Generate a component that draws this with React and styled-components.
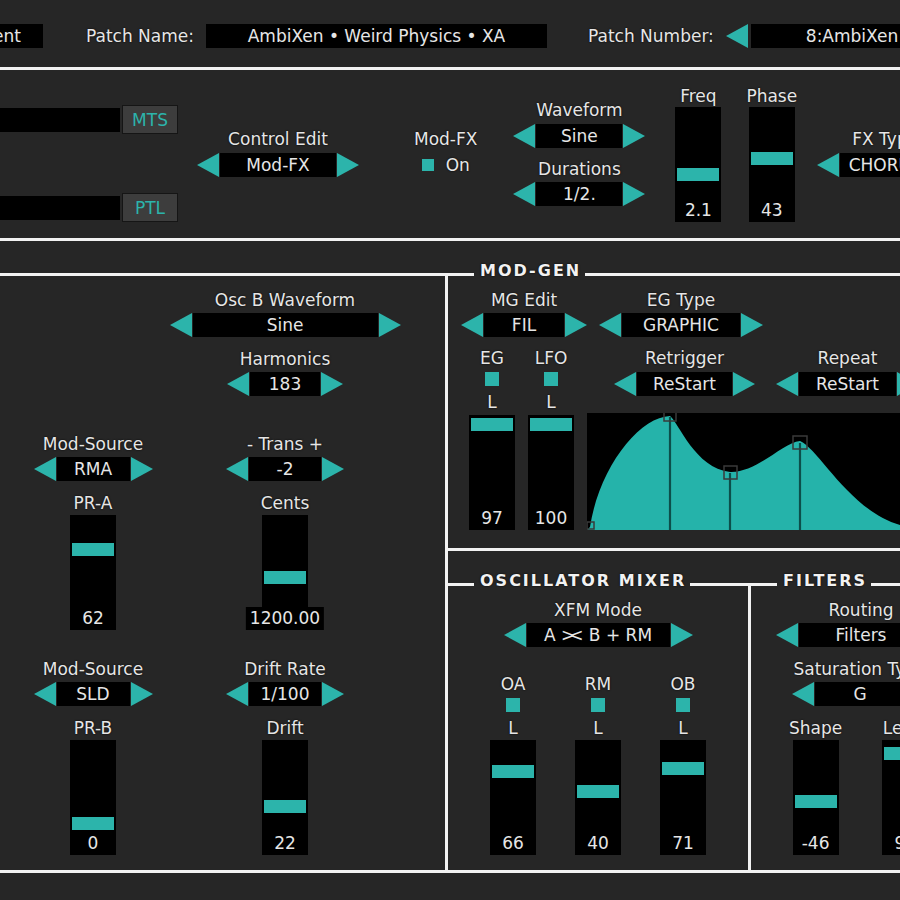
import React from "react";
import styled, { createGlobalStyle } from "styled-components";

const TEAL = "#2cb4ab";
const BG = "#262626";
const LINE = "#f2f2f2";

const GlobalStyle = createGlobalStyle`
  html, body { margin: 0; padding: 0; background: ${BG}; }
  #root { width: 900px; height: 900px; }
`;

const Screen = styled.div`
  width: 900px;
  height: 900px;
  overflow: hidden;
  background: ${BG};
  color: #e6e6e6;
  font-family: "DejaVu Sans", Verdana, sans-serif;
  font-size: 17px;
  line-height: 20px;
  display: flex;
  flex-direction: column;
  white-space: nowrap;
  text-shadow: 0 0 2px #000;
`;

const TopBar = styled.div`
  height: 67px;
  flex-shrink: 0;
  box-sizing: border-box;
  padding-top: 5px;
  display: flex;
  align-items: center;
`;

const Rule = styled.div`
  height: 3px;
  flex-shrink: 0;
  background: ${LINE};
`;

const Field = styled.div`
  flex-shrink: 0;
  width: ${(p) => p.$w}px;
  height: 24px;
  margin-left: ${(p) => p.$ml || 0}px;
  box-sizing: border-box;
  background: #000;
  display: flex;
  align-items: center;
  justify-content: ${(p) => p.$justify || "center"};
  padding: 0 ${(p) => p.$pad || 0}px;
  overflow: hidden;
`;

const BarLabel = styled.span`
  margin-left: ${(p) => p.$ml || 0}px;
  flex-shrink: 0;
`;

const ArrowSvg = styled.svg`
  display: block;
  flex-shrink: 0;
  width: 22px;
  height: 24px;
  margin-left: ${(p) => p.$ml || 0}px;
`;

function Arrow({ dir = "left", ml }) {
  return (
    <ArrowSvg viewBox="0 0 22 24" $ml={ml}>
      <polygon
        points={dir === "left" ? "0,12 22,0 22,24" : "0,0 22,12 0,24"}
        fill={TEAL}
      />
    </ArrowSvg>
  );
}

const StepRow = styled.div`
  display: flex;
  align-items: center;
  gap: 1px;
  flex-shrink: 0;
`;

const ValueBox = styled.div`
  width: ${(p) => p.$w}px;
  height: 24px;
  background: #000;
  display: flex;
  align-items: center;
  justify-content: center;
  flex-shrink: 0;
  overflow: hidden;
`;

const Tight = styled.span`
  letter-spacing: -6px;
  margin-right: 6px;
`;

function Stepper({ value, w }) {
  return (
    <StepRow>
      <Arrow dir="left" />
      <ValueBox $w={w}>{value}</ValueBox>
      <Arrow dir="right" />
    </StepRow>
  );
}

const Group = styled.div`
  display: flex;
  flex-direction: column;
  align-items: center;
  flex-shrink: 0;
  gap: ${(p) => (p.$gap ?? 3)}px;
  margin-top: ${(p) => p.$mt || 0}px;
  margin-left: ${(p) => p.$ml || 0}px;
`;

const Label = styled.div`
  height: 20px;
  line-height: 20px;
`;

const Track = styled.div`
  position: relative;
  width: 46px;
  height: 115px;
  background: #000;
  flex-shrink: 0;
  margin-top: ${(p) => p.$mt || 0}px;
`;

const Handle = styled.div`
  position: absolute;
  left: 2px;
  right: 2px;
  height: 13px;
  background: ${TEAL};
`;

const SliderValue = styled.div`
  position: absolute;
  bottom: 0;
  left: 50%;
  transform: translateX(-50%);
  height: 23px;
  line-height: 23px;
  padding: 0 4px;
  min-width: 46px;
  box-sizing: border-box;
  background: #000;
  text-align: center;
`;

function Slider({ at, value, mt }) {
  return (
    <Track $mt={mt}>
      <Handle style={{ top: at }} />
      <SliderValue>{value}</SliderValue>
    </Track>
  );
}

const Led = styled.div`
  width: ${(p) => p.$size || 14}px;
  height: ${(p) => p.$size || 14}px;
  background: ${TEAL};
  flex-shrink: 0;
  margin-top: ${(p) => p.$mt || 0}px;
`;

const FxSection = styled.div`
  height: 168px;
  flex-shrink: 0;
  display: flex;
  align-items: flex-start;
`;

const PortCol = styled.div`
  display: flex;
  flex-direction: column;
  gap: 59px;
  margin-top: 35px;
  flex-shrink: 0;
`;

const PortRow = styled.div`
  display: flex;
  align-items: center;
  gap: 2px;
`;

const PortBar = styled.div`
  width: 120px;
  height: 24px;
  background: #000;
`;

const PortButton = styled.div`
  width: 56px;
  height: 29px;
  box-sizing: border-box;
  background: #3d3d3d;
  border: 1px solid #151515;
  color: ${TEAL};
  display: flex;
  align-items: center;
  justify-content: center;
  text-shadow: none;
`;

const ToggleRow = styled.div`
  display: flex;
  align-items: center;
  gap: 12px;
  height: 24px;
`;

const Main = styled.div`
  height: 632px;
  flex-shrink: 0;
  box-sizing: border-box;
  padding-top: 32px;
  display: flex;
`;

const Panel = styled.div`
  display: flex;
  flex-direction: column;
  flex: ${(p) =>
    p.$w ? `0 0 ${p.$w}px` : p.$h ? `0 0 ${p.$h}px` : "1 1 0"};
  min-width: 0;
`;

const Column = styled.div`
  display: flex;
  flex-direction: column;
  flex: 1 1 0;
  min-width: 0;
`;

const LowerRow = styled.div`
  display: flex;
  flex: 1 1 auto;
  margin-top: 32px;
`;

const PanelHead = styled.div`
  display: flex;
  height: 3px;
  flex-shrink: 0;
`;

const HeadLine = styled.div`
  height: 3px;
  background: ${LINE};
  flex: ${(p) => (p.$lead ? "0 0 26px" : "1 1 auto")};
`;

const HeadTitle = styled.div`
  align-self: flex-end;
  margin-bottom: -5px;
  padding: 0 4px 0 6px;
  font-weight: bold;
  font-size: 16px;
  letter-spacing: 2px;
  line-height: 20px;
  color: #f2f2f2;
`;

const PanelBody = styled.div`
  flex: 1 1 auto;
  display: flex;
  flex-direction: column;
  align-items: ${(p) => p.$align || "stretch"};
  box-sizing: border-box;
  padding-top: 14px;
  border-bottom: 3px solid ${LINE};
  border-right: ${(p) => (p.$divider ? `3px solid ${LINE}` : "none")};
`;

const TwoCol = styled.div`
  display: grid;
  grid-template-columns: 186px 198px;
  justify-items: center;
  align-items: start;
  margin-top: ${(p) => p.$mt || 0}px;
`;

const Cell = styled.div`
  grid-column: ${(p) => p.$col || 1};
  display: flex;
  flex-direction: column;
  align-items: center;
`;

const Row = styled.div`
  display: flex;
  align-items: flex-start;
  gap: ${(p) => p.$gap || 0}px;
  margin-top: ${(p) => p.$mt || 0}px;
  padding-left: ${(p) => p.$pl || 0}px;
`;

const Channel = styled.div`
  display: flex;
  flex-direction: column;
  align-items: center;
  flex-shrink: 0;
  min-width: 46px;
`;

const EnvPart = styled.div`
  display: flex;
  flex-direction: column;
  flex: 1 1 auto;
  min-width: 0;
`;

const GraphBox = styled.div`
  height: 117px;
  margin-top: 17px;
  background: #000;
`;

const GraphSvg = styled.svg`
  display: block;
  width: 100%;
  height: 100%;
`;

function EnvelopeGraph() {
  const stem = "#0c4f4b";
  const box = "#3a3a3a";
  return (
    <GraphBox>
      <GraphSvg viewBox="0 0 313 117" preserveAspectRatio="none">
        <path
          d="M0,117 L3,114 C12,55 52,4 83,3 C92,10 108,55 143,59 C170,60 195,30 213,28 C232,36 262,97 313,112 L313,117 Z"
          fill="#25b3aa"
        />
        <line x1="83" y1="4" x2="83" y2="117" stroke={stem} strokeWidth="2.2" />
        <line x1="143" y1="60" x2="143" y2="117" stroke={stem} strokeWidth="2.2" />
        <line x1="213" y1="30" x2="213" y2="117" stroke={stem} strokeWidth="2.2" />
        <rect x="77" y="-2" width="12" height="10" fill="none" stroke={box} strokeWidth="1.5" />
        <rect x="137" y="53" width="13" height="13" fill="none" stroke={box} strokeWidth="1.5" />
        <rect x="206" y="23" width="14" height="13" fill="none" stroke={box} strokeWidth="1.5" />
        <rect x="0" y="109" width="7" height="7" fill="none" stroke={box} strokeWidth="1.5" />
      </GraphSvg>
    </GraphBox>
  );
}

function LevelChannel({ name, at, value, ledMt = 4, tagMt = 6, trackMt = 3 }) {
  return (
    <Channel>
      <Label>{name}</Label>
      <Led $mt={ledMt} />
      <Label style={{ marginTop: tagMt }}>L</Label>
      <Slider at={at} value={value} mt={trackMt} />
    </Channel>
  );
}

export default function App() {
  return (
    <>
      <GlobalStyle />
      <Screen>
        <TopBar>
          <Field $w={140} $ml={-97} $justify="flex-end" $pad={22}>
            Current
          </Field>
          <BarLabel $ml={43}>Patch Name:</BarLabel>
          <Field $w={341} $ml={12}>
            AmbiXen • Weird Physics • XA
          </Field>
          <BarLabel $ml={41}>Patch Number:</BarLabel>
          <Arrow dir="left" ml={12} />
          <Field $w={320} $ml={3} $justify="flex-start" $pad={55}>
            8:AmbiXen • Weird Physics • XA
          </Field>
        </TopBar>
        <Rule />
        <FxSection>
          <PortCol>
            <PortRow>
              <PortBar />
              <PortButton>MTS</PortButton>
            </PortRow>
            <PortRow>
              <PortBar />
              <PortButton>PTL</PortButton>
            </PortRow>
          </PortCol>
          <Group $mt={59} $ml={19} $gap={4}>
            <Label>Control Edit</Label>
            <Stepper value="Mod-FX" w={116} />
          </Group>
          <Group $mt={59} $ml={55} $gap={4}>
            <Label>Mod-FX</Label>
            <ToggleRow>
              <Led $size={12} />
              <span>On</span>
            </ToggleRow>
          </Group>
          <Group $mt={30} $ml={36} $gap={0}>
            <Group $gap={4}>
              <Label>Waveform</Label>
              <Stepper value="Sine" w={86} />
            </Group>
            <Group $mt={11}>
              <Label>Durations</Label>
              <Stepper value="1/2." w={86} />
            </Group>
          </Group>
          <Group $mt={16} $ml={30} $gap={1}>
            <Label>Freq</Label>
            <Slider at={61} value="2.1" />
          </Group>
          <Group $mt={16} $ml={25} $gap={1}>
            <Label>Phase</Label>
            <Slider at={45} value="43" />
          </Group>
          <Group $mt={59} $ml={20} $gap={4}>
            <Label>FX Type</Label>
            <Stepper value="CHORUS" w={90} />
          </Group>
        </FxSection>
        <Rule />
        <Main>
          <Panel $w={448}>
            <PanelHead>
              <HeadLine />
            </PanelHead>
            <PanelBody $divider>
              <TwoCol>
                <Cell $col={2}>
                  <Group>
                    <Label>Osc B Waveform</Label>
                    <Stepper value="Sine" w={185} />
                  </Group>
                  <Group $mt={12}>
                    <Label>Harmonics</Label>
                    <Stepper value="183" w={70} />
                  </Group>
                </Cell>
              </TwoCol>
              <TwoCol $mt={38}>
                <Cell>
                  <Group>
                    <Label>Mod-Source</Label>
                    <Stepper value="RMA" w={73} />
                  </Group>
                </Cell>
                <Cell $col={2}>
                  <Group>
                    <Label>- Trans +</Label>
                    <Stepper value="-2" w={72} />
                  </Group>
                </Cell>
              </TwoCol>
              <TwoCol $mt={12}>
                <Cell>
                  <Group $gap={2}>
                    <Label>PR-A</Label>
                    <Slider at={28} value="62" />
                  </Group>
                </Cell>
                <Cell $col={2}>
                  <Group $gap={2}>
                    <Label>Cents</Label>
                    <Slider at={56} value="1200.00" />
                  </Group>
                </Cell>
              </TwoCol>
              <TwoCol $mt={29}>
                <Cell>
                  <Group>
                    <Label>Mod-Source</Label>
                    <Stepper value="SLD" w={73} />
                  </Group>
                </Cell>
                <Cell $col={2}>
                  <Group>
                    <Label>Drift Rate</Label>
                    <Stepper value="1/100" w={72} />
                  </Group>
                </Cell>
              </TwoCol>
              <TwoCol $mt={12}>
                <Cell>
                  <Group $gap={2}>
                    <Label>PR-B</Label>
                    <Slider at={77} value="0" />
                  </Group>
                </Cell>
                <Cell $col={2}>
                  <Group $gap={2}>
                    <Label>Drift</Label>
                    <Slider at={60} value="22" />
                  </Group>
                </Cell>
              </TwoCol>
            </PanelBody>
          </Panel>
          <Column>
            <Panel $h={278}>
              <PanelHead>
                <HeadLine $lead />
                <HeadTitle>MOD-GEN</HeadTitle>
                <HeadLine />
              </PanelHead>
              <PanelBody>
                <Row $pl={13} $gap={12}>
                  <Group>
                    <Label>MG Edit</Label>
                    <Stepper value="FIL" w={80} />
                  </Group>
                  <Group>
                    <Label>EG Type</Label>
                    <Stepper value="GRAPHIC" w={118} />
                  </Group>
                </Row>
                <Row $pl={21} $gap={13} $mt={11}>
                  <LevelChannel name="EG" at={3} value="97" />
                  <LevelChannel name="LFO" at={3} value="100" />
                  <EnvPart>
                    <Row $pl={27} $gap={21}>
                      <Group $gap={4}>
                        <Label>Retrigger</Label>
                        <Stepper value="ReStart" w={95} />
                      </Group>
                      <Group $gap={4}>
                        <Label>Repeat</Label>
                        <Stepper value="ReStart" w={97} />
                      </Group>
                    </Row>
                    <EnvelopeGraph />
                  </EnvPart>
                </Row>
              </PanelBody>
            </Panel>
            <LowerRow>
              <Panel $w={303}>
                <PanelHead>
                  <HeadLine $lead />
                  <HeadTitle>OSCILLATOR MIXER</HeadTitle>
                  <HeadLine />
                </PanelHead>
                <PanelBody $divider $align="center">
                  <Group>
                    <Label>XFM Mode</Label>
                    <Stepper
                      value={
                        <span>
                          A <Tight>&gt;&lt;</Tight> B + RM
                        </span>
                      }
                      w={143}
                    />
                  </Group>
                  <Row $gap={39} $mt={27}>
                    <LevelChannel name="OA" at={25} value="66" trackMt={2} />
                    <LevelChannel name="RM" at={45} value="40" trackMt={2} />
                    <LevelChannel name="OB" at={22} value="71" trackMt={2} />
                  </Row>
                </PanelBody>
              </Panel>
              <Panel>
                <PanelHead>
                  <HeadLine $lead />
                  <HeadTitle>FILTERS</HeadTitle>
                  <HeadLine />
                </PanelHead>
                <PanelBody $align="flex-start">
                  <Group $ml={25}>
                    <Label>Routing</Label>
                    <Stepper value="Filters" w={124} />
                  </Group>
                  <Group $ml={41} $mt={12}>
                    <Label>Saturation Type</Label>
                    <Stepper value="G" w={90} />
                  </Group>
                  <Row $pl={38} $gap={40} $mt={12}>
                    <Group $gap={2}>
                      <Label>Shape</Label>
                      <Slider at={55} value="-46" />
                    </Group>
                    <Group $gap={2}>
                      <Label>Level</Label>
                      <Slider at={7} value="95" />
                    </Group>
                  </Row>
                </PanelBody>
              </Panel>
            </LowerRow>
          </Column>
        </Main>
      </Screen>
    </>
  );
}
